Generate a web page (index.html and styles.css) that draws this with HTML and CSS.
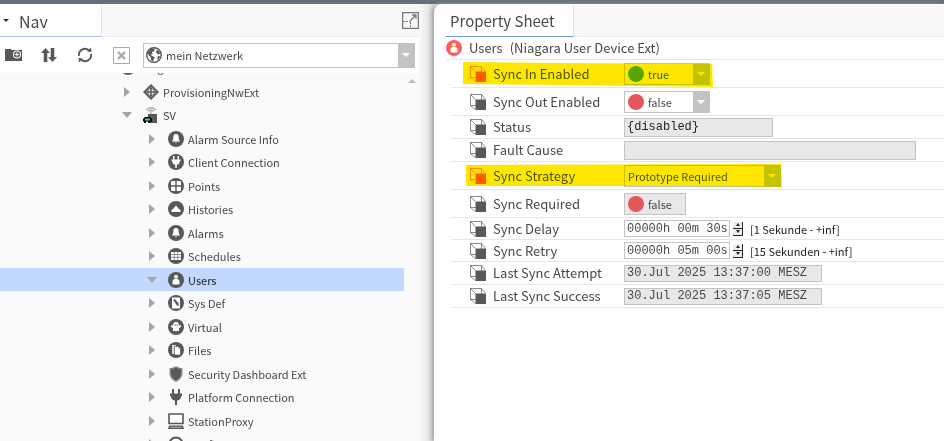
FILE: index.html
```html
<!DOCTYPE html>
<html lang="de">
<head>
    <meta charset="UTF-8">
    <meta name="viewport" content="width=device-width, initial-scale=1.0">
    <title>Property Sheet</title>
    <link rel="stylesheet" href="styles.css">
</head>
<body>
    <!-- shared icons -->
    <svg class="sprite" aria-hidden="true">
        <symbol id="disc" viewBox="0 0 16 16"><circle cx="8" cy="8" r="8" fill="#585858"/></symbol>
        <symbol id="cube" viewBox="0 0 16 16">
            <path d="M.5.5h11l4 5M.5.5v11l5 4M.5.5l5 5M11.500.5V6M.5 11.500H6" fill="none" stroke="currentColor" stroke-width=".7"/>
            <path d="M5.500 5.500H16V16H5.500z" fill="currentColor"/>
        </symbol>
        <symbol id="bell" viewBox="0 0 16 16">
            <use href="#disc"/>
            <path d="M8 3c-2 0-2.700 1.500-2.700 3.500 0 2-.5 3-1.500 4h8.400c-1-1-1.500-2-1.500-4C10.700 4.500 10 3 8 3zM7 11.300h2L8 12.500z" fill="#fff"/>
        </symbol>
        <symbol id="plug" viewBox="0 0 16 16">
            <path d="M4 0h2v4.500h4V0h2v4.500h2V7h-1c0 2.500-1 4-4 4.500V16H7v-4.500C4 11 3 9.500 3 7H2V4.500h2z" fill="currentColor"/>
        </symbol>
        <symbol id="person" viewBox="0 0 16 16">
            <circle cx="8" cy="8" r="8" fill="currentColor"/>
            <circle cx="8" cy="4.800" r="2" fill="#fff"/>
            <path d="M4.500 12.500V9.500c0-1.500 1-2.500 2.500-2.500h2c1.500 0 2.500 1 2.500 2.500v3z" fill="#fff"/>
        </symbol>
    </svg>

    <div class="topbar"></div>
    <div class="workspace">
        <aside class="nav-pane">
            <div class="tabs">
                <h2 class="tab"><i class="caret"></i>Nav</h2>
                <button class="expand" aria-label="Maximize">
                    <svg viewBox="0 0 17 17" width="17" height="17" fill="none" stroke="#777"><path d="M.5.5h16v16H.5z" stroke-width="1.500"/><path d="M1 9.500h7M8.500 10v6" stroke-dasharray="2 1"/><path d="M8 9l6-6M10 3h4v4" stroke-width="1.300"/></svg>
                </button>
            </div>
            <div class="toolbar">
                <button aria-label="New folder"><svg viewBox="0 0 17 16" width="17" height="16"><path d="M0 2h6l1 1h10v11H0z" fill="#585858"/><circle cx="12" cy="7.500" r="4" fill="#fff"/><circle cx="12" cy="7.500" r="3" fill="#585858"/><path d="M12 5.500v4M10 7.500h4" stroke="#fff"/></svg></button>
                <button aria-label="Sort"><svg viewBox="0 0 16 16" width="16" height="16" fill="#585858"><path d="M4.500 1L9 6H6.300v9H2.700V6H0zM11.500 15L7 10h2.700V1h3.600v9H16z"/></svg></button>
                <button aria-label="Refresh"><svg viewBox="0 0 16 16" width="16" height="16" fill="none" stroke="#585858" stroke-width="1.800"><path d="M2 9a6 6 0 0 1 10-5.500M14 7a6 6 0 0 1-10 5.500"/><path d="M10 4.500L14.500 5l-.5-4.500zM6 11.500L1.500 11l.5 4.500z" fill="#585858" stroke="none"/></svg></button>
                <button aria-label="Close"><svg viewBox="0 0 17 17" width="17" height="17" fill="none" stroke="#aaa"><path d="M.5.5h16v16H.5z"/><path d="M5 5l7 7M12 5l-7 7" stroke-width="2.400"/></svg></button>
                <div class="combo root">
                    <svg viewBox="0 0 16 16" width="16" height="16"><circle cx="8" cy="8" r="7.300" fill="#fff" stroke="#585858" stroke-width="1.400"/><path d="M1.500 5.500L5 1.500l4 .3-1 2.400-2 .8.500 2-2 .5 2.500 2 2 .8-1.500 2.500-.5 1.700-2-1.500-.3-3L2.500 8zM11 3l2 1 1.300 2.500-2 1-1.800-1.500-.5-1.800zM12 9l2.300.3-1.500 3-1.800.7z" fill="#585858"/></svg>
                    <select aria-label="Navigation root"><option>mein Netzwerk</option></select>
                    <i class="drop"></i>
                </div>
            </div>
            <div class="tree-wrap">
            <ul class="tree">
                <li class="level-0"><svg class="icon"><use href="#disc"/></svg>NiagaraNetwork</li>
                <li class="level-1"><i class="arrow"></i><svg class="icon" viewBox="0 0 16 16"><path d="M8 0l8 8-8 8-8-8z" fill="#585858"/><path d="M8 2.500L13.500 8 8 13.500 2.500 8z" fill="#fafafa"/><path d="M8 1v14M1 8h14" stroke="#585858" stroke-width="1.500"/><circle cx="8" cy="8" r="3.500" fill="none" stroke="#585858"/></svg>ProvisioningNwExt</li>
                <li class="level-1"><i class="arrow open"></i><svg class="icon" viewBox="0 0 16 16"><path d="M3 3c2-3 8-3 10 0M5 4.500c1.500-2 4.500-2 6 0" fill="none" stroke="#aaa" stroke-width="1.300"/><path d="M8 4v4" stroke="#888"/><path d="M5 7h9v9H5z" fill="#585858"/><path d="M0 12l2-2h5l2 2v2.500H7.500V16H5.500v-1.500H3V16H1v-1.500H0z" fill="#000"/><path d="M2 11.500h5v2H2z" fill="#3d6"/></svg>SV</li>
                <li class="level-2"><i class="arrow"></i><svg class="icon"><use href="#bell"/></svg>Alarm Source Info</li>
                <li class="level-2"><i class="arrow"></i><svg class="icon" viewBox="0 0 16 16"><use href="#disc"/><use href="#plug" x="2" y="2" width="12" height="12" color="#fff"/></svg>Client Connection</li>
                <li class="level-2"><i class="arrow"></i><svg class="icon" viewBox="0 0 16 16"><use href="#disc"/><path d="M4 3h3.300v4.300H3V4zM8.700 3H12l1 1v3.300H8.700zM3 8.700h4.300V13H4l-1-1zM8.700 8.700H13V12l-1 1H8.700z" fill="#fff"/></svg>Points</li>
                <li class="level-2"><i class="arrow"></i><svg class="icon" viewBox="0 0 16 16"><use href="#disc"/><path d="M3.500 11V9l2-1.500L8 4.500l2.500 3 2 1.500v2z" fill="#fff"/></svg>Histories</li>
                <li class="level-2"><i class="arrow"></i><svg class="icon"><use href="#bell"/></svg>Alarms</li>
                <li class="level-2"><i class="arrow"></i><svg class="icon" viewBox="0 0 16 16"><use href="#disc"/><path d="M3 4h10v8H3z" fill="#fff"/><path d="M3 6.500h10M3 9.300h10M6.300 4v8M9.700 4v8" stroke="#777" stroke-width=".8"/></svg>Schedules</li>
                <li class="level-2 selected"><i class="arrow open"></i><svg class="icon" color="#585858"><use href="#person"/></svg>Users</li>
                <li class="level-2"><i class="arrow"></i><svg class="icon" viewBox="0 0 16 16"><use href="#disc"/><path d="M4 2.500h8v11H4z" fill="#fff"/><path d="M5 5l2-1 1.500 2 2 2 .5 3-2-.5-2-3z" fill="#585858"/></svg>Sys Def</li>
                <li class="level-2"><i class="arrow"></i><svg class="icon" viewBox="0 0 16 16"><use href="#disc"/><path d="M5 12.500V9L3 8l.5-2L5 6.500C5 4 6.300 3 8 3s3 1 3 3.500l1.500-.5.5 2-2 1v3.500l-1.500-1-1.500 1-1.500-1z" fill="#fff"/><path d="M6.500 5.500h1v1.500h-1zM8.700 5.500h1v1.500h-1z" fill="#585858"/></svg>Virtual</li>
                <li class="level-2"><i class="arrow"></i><svg class="icon" viewBox="0 0 16 16"><use href="#disc"/><path d="M4 3h4v9H4z" fill="#ddd"/><path d="M6.500 4.500H10l2.500 2.500v6h-6z" fill="#fff" stroke="#585858" stroke-width=".7"/></svg>Files</li>
                <li class="level-2"><i class="arrow"></i><svg class="icon" viewBox="0 0 16 16"><path d="M1.500 2C4 2 6 1.500 8 0c2 1.500 4 2 6.500 2v5c0 4-2.500 7-6.500 9-4-2-6.500-5-6.500-9z" fill="#888"/><path d="M3 3.300c2 0 3.500-.5 5-1.500 1.500 1 3 1.500 5 1.500V7c0 3.300-2 5.500-5 7.300C5 12.500 3 10.300 3 7z" fill="#585858"/></svg>Security Dashboard Ext</li>
                <li class="level-2"><i class="arrow"></i><svg class="icon"><use href="#plug" color="#585858"/></svg>Platform Connection</li>
                <li class="level-2"><i class="arrow"></i><svg class="icon" viewBox="0 0 16 16"><path d="M1 1h14v9.500H1z" fill="none" stroke="#585858" stroke-width="1.600"/><path d="M1 12.500h14l1 3.500H0z" fill="#585858"/><path d="M2 14.300h12" stroke="#ccc" stroke-width=".8"/></svg>StationProxy</li>
                <li class="level-2"><i class="arrow"></i><svg class="icon" viewBox="0 0 16 16"><circle cx="8" cy="8" r="6.500" fill="none" stroke="#585858" stroke-width="2"/></svg>Config</li>
            </ul>
            <i class="scroll-up"></i>
            </div>
        </aside>

        <main class="sheet">
            <div class="tabs">
                <h2 class="tab">Property Sheet</h2>
            </div>
            <div class="subject"><svg class="icon"><use href="#person"/></svg><span>Users</span><span>(Niagara User Device Ext)</span></div>
            <form class="props">
                <div class="prop tall marked">
                    <svg class="icon"><use href="#cube"/></svg><label for="syncIn">Sync In Enabled</label>
                    <div class="combo bool"><i class="dot on"></i><select id="syncIn"><option>true</option><option>false</option></select><i class="drop"></i></div>
                    <svg class="marker marker-in" viewBox="0 0 250 26" preserveAspectRatio="none"><path d="M0 1l95 1 154 1 1 23-150-2L0 23z" fill="#ffe600"/></svg>
                </div>
                <div class="prop tall">
                    <svg class="icon"><use href="#cube"/></svg><label for="syncOut">Sync Out Enabled</label>
                    <div class="combo bool"><i class="dot"></i><select id="syncOut"><option>false</option><option>true</option></select><i class="drop"></i></div>
                </div>
                <div class="prop">
                    <svg class="icon"><use href="#cube"/></svg><label for="status">Status</label>
                    <input class="field status" id="status" value="{disabled}" readonly>
                </div>
                <div class="prop">
                    <svg class="icon"><use href="#cube"/></svg><label for="fault">Fault Cause</label>
                    <input class="field fault" id="fault" readonly>
                </div>
                <div class="prop tall marked">
                    <svg class="icon"><use href="#cube"/></svg><label for="strategy">Sync Strategy</label>
                    <div class="combo strategy"><select id="strategy"><option>Prototype Required</option></select><i class="drop"></i></div>
                    <svg class="marker marker-strategy" viewBox="0 0 316 24" preserveAspectRatio="none"><path d="M0 1l315-1 1 23-100-1H0z" fill="#ffe600"/></svg>
                </div>
                <div class="prop tall">
                    <svg class="icon"><use href="#cube"/></svg><label for="required">Sync Required</label>
                    <output class="combo flag" id="required"><i class="dot"></i>false</output>
                </div>
                <div class="prop time">
                    <svg class="icon"><use href="#cube"/></svg><label for="delay">Sync Delay</label>
                    <input class="field duration" id="delay" value="00000h 00m 30s">
                    <span class="spin"><button type="button" class="up" aria-label="Increase"></button><button type="button" class="down" aria-label="Decrease"></button></span>
                    <span class="range">[1 Sekunde - +inf]</span>
                </div>
                <div class="prop time">
                    <svg class="icon"><use href="#cube"/></svg><label for="retry">Sync Retry</label>
                    <input class="field duration" id="retry" value="00000h 05m 00s">
                    <span class="spin"><button type="button" class="up" aria-label="Increase"></button><button type="button" class="down" aria-label="Decrease"></button></span>
                    <span class="range">[15 Sekunden - +inf]</span>
                </div>
                <div class="prop">
                    <svg class="icon"><use href="#cube"/></svg><label for="attempt">Last Sync Attempt</label>
                    <input class="field stamp" id="attempt" value="30.Jul 2025 13:37:00 MESZ" readonly>
                </div>
                <div class="prop">
                    <svg class="icon"><use href="#cube"/></svg><label for="success">Last Sync Success</label>
                    <input class="field stamp" id="success" value="30.Jul 2025 13:37:05 MESZ" readonly>
                </div>
            </form>
        </main>
    </div>
</body>
</html>
```
FILE: styles.css
```css
* {
    box-sizing: border-box;
}

body {
    margin: 0;
    height: 100vh;
    display: flex;
    flex-direction: column;
    overflow: hidden;
    background: #f0f0f0;
    color: #484848;
    font-family: "Noto Sans CJK SC", "Noto Sans", sans-serif;
    font-size: 11px;
    line-height: 16px;
}

button, select, input {
    font: inherit;
    color: inherit;
    margin: 0;
    padding: 0;
    border: none;
    background: none;
    border-radius: 0;
}

.sprite {
    display: none;
}

.topbar {
    flex: none;
    height: 4px;
    background: #666e79;
}

.workspace {
    flex: 1;
    min-height: 0;
    display: grid;
    grid-template-columns: 434px 1fr;
}

.icon {
    flex: none;
    width: 16px;
    height: 16px;
}

.tabs {
    flex: none;
    display: flex;
    justify-content: space-between;
    align-items: stretch;
    height: 33px;
    background: #f8f8f8;
    border-top: 1px solid #fff;
    border-bottom: 1px solid #ececec;
}

.tab {
    display: flex;
    align-items: center;
    margin: 0 0 -1px;
    background: #fff;
    border-right: 1px solid #e4e4e4;
    border-bottom: 1px solid #a9c4f5;
    font-size: 16px;
    font-weight: normal;
}

/* left side */
.nav-pane {
    display: flex;
    flex-direction: column;
    min-height: 0;
    padding-right: 15px;
    background: linear-gradient(90deg, #f8f8f8 420px, #ddd 434px);
}

.nav-pane .tab {
    width: 102px;
    gap: 10px;
    padding-left: 3px;
}

.caret {
    border: 3px solid transparent;
    border-top-color: #333;
    border-bottom: none;
}

.expand {
    display: flex;
    align-items: center;
    width: 17px;
}

.toolbar {
    flex: none;
    display: flex;
    align-items: center;
    height: 36px;
    padding: 0 4px 0 5px;
    background: #fff;
}

.toolbar button {
    display: flex;
    width: 36px;
}

.combo {
    display: flex;
    align-items: center;
    height: 22px;
    border: 1px solid #c3c3c3;
    background: #fff;
}

.combo select {
    flex: 1;
    min-width: 0;
    height: 100%;
    appearance: none;
}

.root {
    flex: 1;
    height: 25px;
    margin-left: -6px;
    padding-left: 2px;
    gap: 4px;
}

.drop {
    flex: none;
    align-self: stretch;
    display: flex;
    align-items: center;
    justify-content: center;
    width: 16px;
    background: #c3c3c3;
    pointer-events: none;
}

.drop::before {
    content: "";
    border: 4px solid transparent;
    border-top-color: #fff;
    border-bottom: none;
}

.tree-wrap {
    flex: 1;
    min-height: 0;
    overflow: hidden;
    position: relative;
    background: #fafafa;
}

/* first row is partly scrolled out of view */
.tree {
    list-style: none;
    margin: -19px 15px 0 0;
    padding: 0;
}

.tree li {
    display: flex;
    align-items: center;
    gap: 4px;
    height: 24px;
}

.tree li:nth-child(even) {
    height: 23px;
}

.tree .level-0 {
    height: 26px;
    padding-left: 120px;
}

.level-1 {
    padding-left: 121px;
}

.level-2 {
    padding-left: 146px;
}

.tree .selected {
    background: #c2d8ff;
    color: #222;
}

.arrow {
    flex: none;
    display: flex;
    justify-content: center;
    width: 12px;
    margin-right: 6px;
}

.arrow::before {
    content: "";
    border: 5px solid transparent;
    border-left: 6px solid #a5a5a5;
    border-right: none;
}

.arrow.open::before {
    border: 5px solid transparent;
    border-top: 6px solid #a5a5a5;
    border-bottom: none;
}

.scroll-up {
    position: absolute;
    top: 6px;
    right: 3px;
    border: 4px solid transparent;
    border-bottom-color: #bbb;
    border-top: none;
}

/* right side */
.sheet {
    padding-left: 12px;
    background: #fff;
    border-top-left-radius: 8px;
    box-shadow: -2px 0 5px #999;
}

.sheet .tab {
    padding: 0 18px 0 4px;
    border-bottom-color: #7098d8;
    font-size: 15px;
}

.subject {
    display: flex;
    align-items: center;
    gap: 7px;
    height: 23px;
    border-bottom: 1px solid #e6e6e6;
    font-size: 13px;
}

.subject .icon {
    color: #ff5c5c;
}

.props {
    margin-left: 5px;
}

.prop {
    position: relative;
    display: flex;
    align-items: center;
    height: 23px;
    padding-left: 19px;
    border-bottom: 1px solid #e6e6e6;
}

.prop.tall {
    height: 28px;
}

.prop.time {
    height: 22px;
}

.prop > .icon {
    color: #585858;
}

.prop.marked > .icon {
    color: #ff5c5c;
}

.prop label {
    flex: none;
    width: 131px;
    margin: 0 0 0 7px;
    font-size: 13px;
}

.field {
    height: 19px;
    padding: 0 2px;
    border: 1px solid #c3c3c3;
    background: #e8e8e8;
    font-family: "Liberation Mono", monospace;
    font-size: 12px;
}

.status {
    width: 149px;
    color: #222;
}

.fault {
    width: 292px;
}

.duration {
    width: 106px;
    height: 17px;
    background: #fff;
}

.stamp {
    width: 198px;
    height: 17px;
}

.bool {
    width: 86px;
    padding-left: 3px;
    gap: 4px;
}

.dot {
    flex: none;
    width: 16px;
    height: 16px;
    border-radius: 50%;
    background: #e4575c;
}

.dot.on {
    background: #55a630;
}

.strategy {
    width: 157px;
    padding-left: 3px;
}

.flag {
    width: 62px;
    padding-left: 3px;
    gap: 4px;
    background: #e8e8e8;
}

.spin {
    display: flex;
    flex-direction: column;
    width: 10px;
    margin: 0 7px 0 3px;
}

.spin button {
    display: flex;
    align-items: center;
    justify-content: center;
    height: 7px;
    border-right: 1px solid #222;
    border-bottom: 1px solid #222;
    background: #eee;
}

.spin button::before {
    content: "";
    border: 2px solid transparent;
}

.spin .up::before {
    border-bottom: 3px solid #222;
    border-top: none;
}

.spin .down::before {
    border-top: 3px solid #222;
    border-bottom: none;
}

.range {
    color: #222;
}

/* highlighter strokes drawn over the row */
.marker {
    position: absolute;
    mix-blend-mode: darken;
    pointer-events: none;
}

.marker-in {
    left: 12px;
    top: 1px;
    width: 250px;
    height: 26px;
}

.marker-strategy {
    left: 15px;
    top: 2px;
    width: 316px;
    height: 24px;
}
```
